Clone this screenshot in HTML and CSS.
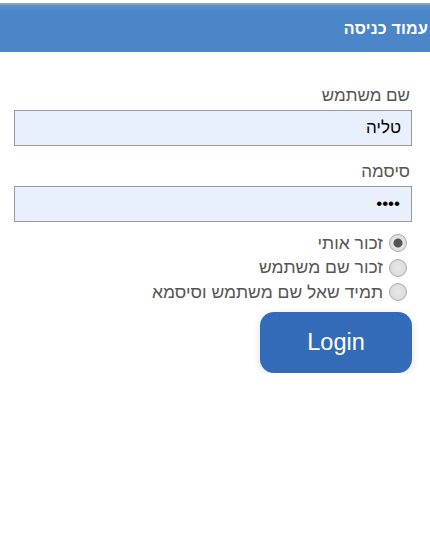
FILE: index.html
```html
<!DOCTYPE html>
<html lang="he" dir="rtl">
<head>
    <meta charset="UTF-8">
    <title>עמוד כניסה</title>
    <link rel="stylesheet" href="styles.css">
</head>
<body>
    <header class="topbar">
        <h1>עמוד כניסה</h1>
    </header>
    <main class="login">
        <form class="login-form">
            <label class="field-label" for="user">שם משתמש</label>
            <input class="field" type="text" id="user" value="טליה">
            <label class="field-label" for="pass">סיסמה</label>
            <input class="field pass" type="password" id="pass" value="1234">
            <div class="options">
                <label class="option"><input type="radio" name="remember" checked><span>זכור אותי</span></label>
                <label class="option"><input type="radio" name="remember"><span>זכור שם משתמש</span></label>
                <label class="option"><input type="radio" name="remember"><span>תמיד שאל שם משתמש וסיסמא</span></label>
            </div>
            <button type="button" class="login-btn">Login</button>
        </form>
    </main>
</body>
</html>
```

FILE: styles.css
```css
body {
    margin: 0;
    padding: 0;
    font-family: "Liberation Sans", "DejaVu Sans", Arial, sans-serif;
    background: #ffffff;
    color: #555;
}

.topbar {
    height: 47px;
    margin-top: 3px;
    border-top: 2px solid #8aa2c0;
    background: linear-gradient(to bottom, #5b91cf, #4a86c8 6px, #4a86c8);
    display: flex;
    align-items: center;
    padding: 0 2px;
}

.topbar h1 {
    margin: 0;
    color: #ffffff;
    font-size: 16px;
    font-weight: bold;
    letter-spacing: 0.2px;
}

.login {
    padding: 34px 19px 0 19px;
}

.login-form {
    display: flex;
    flex-direction: column;
    align-items: stretch;
}

.field-label {
    font-size: 17px;
    color: #555;
    padding-right: 1px;
    margin-bottom: 4px;
}

.field {
    height: 36px;
    box-sizing: border-box;
    border: 1px solid #999;
    background: #e8f0fe;
    font-family: inherit;
    font-size: 17px;
    color: #000;
    padding: 0 10px;
    margin: 0 -1px 16px -5px;
    outline: none;
}

.field.pass {
    padding-right: 11px;
    margin-bottom: 10px;
}

.options {
    display: flex;
    flex-direction: column;
    align-items: flex-start;
    gap: 2px;
}

.option {
    display: flex;
    align-items: center;
    gap: 6px;
    font-size: 17.5px;
    color: #555;
    height: 22.5px;
}

.option input {
    appearance: none;
    width: 18px;
    height: 18px;
    margin: 0 4px 0 0;
    border: 1px solid #aaa;
    border-radius: 50%;
    background: radial-gradient(circle, #e8e8e8, #d6d6d6);
}

.option input:checked {
    background: radial-gradient(circle, #555 0 4px, #e6e6e6 5px, #d4d4d4);
}

.login-btn {
    align-self: flex-start;
    margin: 8px -1px 0 0;
    width: 152px;
    height: 61px;
    border: none;
    border-radius: 14px;
    background: #336bb8;
    color: #ffffff;
    font-family: inherit;
    font-size: 23.5px;
    box-shadow: 0 2px 10px rgba(0, 0, 0, 0.12);
    cursor: pointer;
}
```
